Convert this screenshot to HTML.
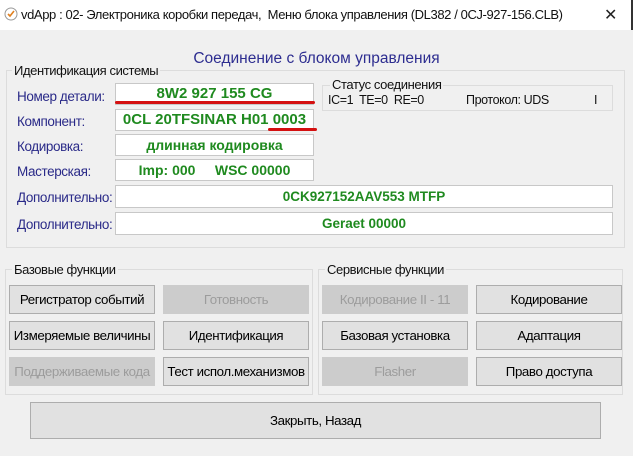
<!DOCTYPE html>
<html><head><meta charset="utf-8"><style>
body{margin:0;width:633px;height:456px;background:#f0f0f0;font-family:"Liberation Sans",sans-serif;position:relative;overflow:hidden}
.a{position:absolute;white-space:nowrap}
.t{font-size:12.5px;letter-spacing:-0.4px}
.lbl{color:#2a2a88;font-size:13.5px;letter-spacing:-0.4px}
.f{position:absolute;background:#fff;border:1px solid #c8c8c8;color:#1f8a1f;font-weight:bold;font-size:15px;text-align:center;box-sizing:border-box;white-space:nowrap}
.g{position:absolute;border:1px solid #dcdcdc;box-sizing:border-box}
.lg{position:absolute;background:#f0f0f0;padding:0 2px;font-size:13px;letter-spacing:-0.4px;color:#111}
.b{position:absolute;width:146px;height:29px;background:#e1e1e1;border:1px solid #adadad;box-sizing:border-box;font-size:13.3px;letter-spacing:-0.4px;text-align:center;line-height:27px;color:#000;white-space:nowrap}
.d{background:#cccccc;border-color:#cccccc;color:#9c9c9c}
.r{position:absolute;height:3px;background:#d41010;border-radius:2px}
</style></head><body>
<div class="a" style="left:0;top:0;width:631px;height:30px;background:#fff;border-right:2px solid #333"></div>
<svg class="a" style="left:4px;top:7px" width="14" height="14" viewBox="0 0 14 14"><circle cx="7" cy="7" r="6" fill="#fff" stroke="#999"/><path d="M4 7l2 2 4-5" stroke="#e08020" stroke-width="1.6" fill="none"/></svg>
<div class="a t" style="left:21px;top:7px;font-size:13px;color:#111">vdApp : 02- Электроника коробки передач,&nbsp; Меню блока управления (DL382 / 0CJ-927-156.CLB)</div>
<div class="a" style="left:604px;top:5px;font-size:16px;color:#222">✕</div>

<div class="a" style="left:0;width:633px;top:50px;text-align:center;color:#2d2d90;font-size:15.5px">Соединение с блоком управления</div>

<div class="g" style="left:6px;top:70px;width:619px;height:178px"></div>
<div class="lg" style="left:12px;top:63px">Идентификация системы</div>

<div class="a lbl" style="left:17px;top:89px">Номер детали:</div>
<div class="f" style="left:115px;top:83px;width:199px;height:22px;line-height:20px">8W2 927 155 CG</div>
<div class="r" style="left:115px;top:101px;width:200px"></div>
<div class="a lbl" style="left:17px;top:114px">Компонент:</div>
<div class="f" style="left:115px;top:109px;width:199px;height:22px;line-height:20px">0CL 20TFSINAR H01 0003</div>
<div class="r" style="left:268px;top:128px;width:49px"></div>
<div class="a lbl" style="left:17px;top:139px">Кодировка:</div>
<div class="f" style="left:115px;top:134px;width:199px;height:22px;line-height:20px;font-size:14px">длинная кодировка</div>
<div class="a lbl" style="left:17px;top:164px">Мастерская:</div>
<div class="f" style="left:115px;top:159px;width:199px;height:22px;line-height:20px;font-size:14px">Imp: 000 &nbsp;&nbsp;&nbsp;&nbsp;WSC 00000</div>
<div class="a lbl" style="left:17px;top:190px">Дополнительно:</div>
<div class="f" style="left:115px;top:185px;width:498px;height:23px;line-height:21px;font-size:13.5px">0CK927152AAV553 MTFP</div>
<div class="a lbl" style="left:17px;top:217px">Дополнительно:</div>
<div class="f" style="left:115px;top:212px;width:498px;height:23px;line-height:21px;font-size:13.5px">Geraet 00000</div>

<div class="g" style="left:322px;top:85px;width:291px;height:26px"></div>
<div class="lg" style="left:330px;top:77px">Статус соединения</div>
<div class="a t" style="left:328px;top:93px;color:#111">IC=1&nbsp; TE=0&nbsp; RE=0</div>
<div class="a t" style="left:466px;top:93px;color:#111">Протокол: UDS</div>
<div class="a t" style="left:594px;top:93px;color:#111">I</div>

<div class="g" style="left:5px;top:269px;width:308px;height:126px"></div>
<div class="lg" style="left:12px;top:262px">Базовые функции</div>
<div class="g" style="left:318px;top:269px;width:305px;height:126px"></div>
<div class="lg" style="left:325px;top:262px">Сервисные функции</div>

<div class="b" style="left:9px;top:285px">Регистратор событий</div>
<div class="b d" style="left:163px;top:285px">Готовность</div>
<div class="b d" style="left:322px;top:285px">Кодирование II - 11</div>
<div class="b" style="left:476px;top:285px">Кодирование</div>
<div class="b" style="left:9px;top:321px">Измеряемые величины</div>
<div class="b" style="left:163px;top:321px">Идентификация</div>
<div class="b" style="left:322px;top:321px">Базовая установка</div>
<div class="b" style="left:476px;top:321px">Адаптация</div>
<div class="b d" style="left:9px;top:357px">Поддерживаемые кода</div>
<div class="b" style="left:163px;top:357px">Тест испол.механизмов</div>
<div class="b d" style="left:322px;top:357px">Flasher</div>
<div class="b" style="left:476px;top:357px">Право доступа</div>

<div class="b" style="left:30px;top:402px;width:571px;height:37px;line-height:35px">Закрыть, Назад</div>
</body></html>
